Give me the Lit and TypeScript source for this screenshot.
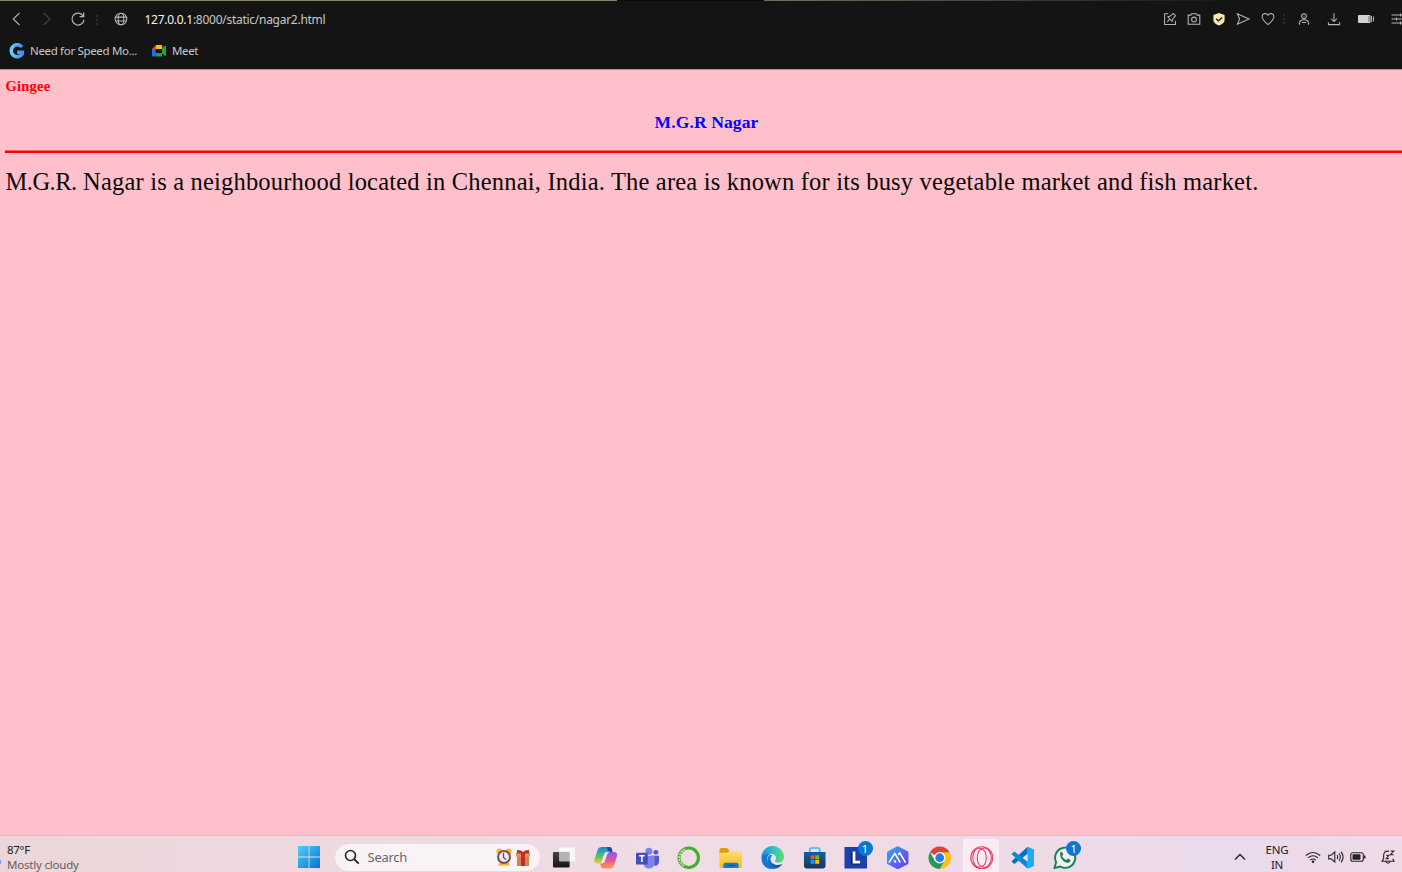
import { LitElement, html, svg, css } from "lit";
import { customElement } from "lit/decorators.js";

const line = (body: unknown, cls = "") => html`<svg class="glyph ${cls}" viewBox="0 0 16 16">${body}</svg>`;
const app = (body: unknown) => html`<svg class="app" viewBox="0 0 24 24">${body}</svg>`;

@customElement("browser-bar")
class BrowserBar extends LitElement {
  static styles = css`
    :host { display: block; height: 69px; box-sizing: border-box; background: #141414; font-family: "Noto Sans", "Open Sans", sans-serif; font-size: 12px; color: #c8c8c8; overflow: hidden; }
    .tabs { display: flex; justify-content: space-between; height: 1px; background: #0b0b0b; }
    .tabs .left { width: 617px; background: #8b8468; }
    .tabs .right { width: 638px; background: linear-gradient(90deg, #77705a, #3a382e 45%, #141414 75%); }
    .nav { display: flex; align-items: center; height: 37px; white-space: nowrap; }
    .glyph { width: 16px; height: 16px; flex: none; fill: none; stroke: #b5b5b5; stroke-width: 1.05; display: block; margin-bottom: 0.4px; }
    .dim { stroke: #454545; }
    .dots { flex: none; width: 2px; height: 10px; background: repeating-linear-gradient(#2c2c2c 0 2px, transparent 2px 4px); }
    .back { margin-left: 8px; }
    .fwd { margin-left: 15px; }
    .reload { margin-left: 15px; margin-right: 10px; }
    .globe { margin-left: 15px; }
    .url { margin-left: 15.5px; letter-spacing: -0.27px; line-height: 18px; }
    .host { color: #f3f3f3; }
    .tools { display: flex; align-items: center; gap: 8.6px; margin-left: auto; margin-right: -5px; }
    .tools .dots { margin-left: -2px; }
    .person { margin-left: 2.5px; }
    .download { margin-left: 5.5px; }
    .battery { margin-left: 7.5px; }
    .sliders { margin-left: 8.5px; }
    .marks { display: flex; align-items: center; height: 26px; padding-left: 9px; white-space: nowrap; line-height: 18px; font-size: 11.5px; }
    .mark { width: 16px; height: 16px; flex: none; }
    .name { margin: 0 14px 0 5px; letter-spacing: -0.33px; }
  `;
  render() {
    return html`
      <div class="tabs"><div class="left"></div><div class="right"></div></div>
      <div class="nav">
        ${line(svg`<path d="M11.5 2 5.2 8l6.3 6"/>`, "back")}
        ${line(svg`<path d="m4.7 2 6.3 6-6.3 6"/>`, "fwd dim")}
        ${line(svg`<path d="M13 4.6A6 6 0 1 0 14 8.9M13.7 1.6v4H9.6" stroke-width="1.25"/>`, "reload")}
        <span class="dots"></span>
        ${line(svg`<circle cx="8" cy="8" r="5.8"/><ellipse cx="8" cy="8" rx="2.8" ry="5.8"/><path d="M2.6 6.1h10.8M2.6 10h10.8"/>`, "globe")}
        <span class="url"><span class="host">127.0.0.1</span>:8000/static/nagar2.html</span>
        <div class="tools">
          ${line(svg`<path d="M6.2 2.8H2.6v10.7h10.8V9.8M5.2 10.8l3-3M5.8 6l4.3 4.3.8-2.6 2.7-3-2.3-2.3-3 2.7z"/>`)}
          ${line(svg`<path d="M2.2 4.1h2.5l1-1.4h4.6l1 1.4h2.5v9.1H2.2z"/><circle cx="8" cy="8.5" r="2.4"/>`)}
          ${line(svg`<path d="m8 2 5.6 1.9v5.2c0 2.7-2.2 4.200-5.600 5.400-3.400-1.200-5.600-2.700-5.600-5.400V3.900z" fill="#fbe6b5" stroke="none"/><path d="m5.2 7.8 2.2 2 3.8-3.400" stroke="#222" stroke-width="1.4"/>`)}
          ${line(svg`<path d="m2.4 2.800 11.600 5.200-11.600 5.300 2.200-5.300z"/>`)}
          ${line(svg`<path d="M8 13.6C5 11.2 2.1 8.7 2.1 5.6c0-3.2 4-4.3 5.9-1.3 1.9-3 5.9-1.9 5.9 1.3 0 3.1-2.9 5.6-5.9 8z"/>`)}
          <span class="dots"></span>
          ${line(svg`<circle cx="8" cy="5.1" r="2.4"/><circle cx="8" cy="5.100" r=".6" fill="#b5b5b5" stroke="none"/><path d="M3.500 13.700v-1.300c0-2.300 1.700-3.600 4.500-3.600s4.500 1.300 4.500 3.600v1.300M5.800 11.400h4.400"/>`, "person")}
          ${line(svg`<path d="M8 2.200v8.100M5 7.500l3 3 3-3M2.400 11.200v2.400h11.200v-2.400"/>`, "download")}
          ${line(svg`<rect x="0" y="4" width="12.500" height="8" rx="1" fill="#d2d2d2" stroke="none"/><path d="M11 5v6" stroke="#444" stroke-width=".7"/><path d="M13.500 5v6M15.500 5.500v5" stroke-width="1"/>`, "battery")}
          ${line(svg`<path d="M.5 4H16M.5 8H16M.5 12H16M9.500 2.500v3M5.500 6.500v3M9.500 10.500v3"/>`, "sliders")}
        </div>
      </div>
      <div class="marks">
        <svg class="mark" viewBox="0 0 16 16"><defs><linearGradient id="g"><stop stop-color="#65d0ff"/><stop offset="1" stop-color="#438cf5"/></linearGradient></defs><path d="M13 4A6 6 0 1 0 13.300 11V9.200H8.200" fill="none" stroke="url(#g)" stroke-width="3.600"/></svg>
        <span class="name">Need for Speed Mo...</span>
        <svg class="mark" viewBox="0 0 16 16"><path d="M1 6 5 2v4z" fill="#ea4335"/><path d="M1 6h3.700v7.500H2A1 1 0 0 1 1 12.500z" fill="#1a73e8"/><path d="M5 2h6.200v4H5z" fill="#fbbc04"/><path d="M4.700 10H11V5l3-2.200q1-.5 1 .6v9q0 1-1 .4L11 10.500V13.500H4.700z" fill="#24a148"/><path d="M5 6h5v4H5z" fill="#141414"/></svg>
        <span class="name">Meet</span>
      </div>
    `;
  }
}

@customElement("place-page")
class PlacePage extends LitElement {
  static styles = css`
    :host { display: block; height: 766px; box-sizing: border-box; background: #ffc0cb; border-top: 1px solid #b98c95; padding: 6px 0 0 5px; font-family: "Liberation Serif", serif; overflow: hidden; white-space: nowrap; }
    .town { margin: 0 0 0 0.6px; font-size: 14.5px; line-height: 20px; font-weight: bold; color: #f00; letter-spacing: 0.2px; }
    .title { margin: 15px -6px 0 0; text-align: center; font-size: 17.5px; line-height: 22px; font-weight: bold; color: #00f; letter-spacing: 0.12px; }
    .rule { height: 2px; background: #f00; border-top: 1px solid #ff5c62; margin-top: 17px; }
    .about { margin: 13px 0 0 0.5px; font-size: 24.5px; line-height: 31px; color: #080808; letter-spacing: 0.19px; }
    .initials { letter-spacing: -0.5px; }
  `;
  render() {
    return html`
      <h2 class="town">Gingee</h2>
      <h1 class="title">M.G.R Nagar</h1>
      <div class="rule"></div>
      <p class="about"><span class="initials">M.G.R.</span> Nagar is a neighbourhood located in Chennai, India. The area is known for its busy vegetable market and fish market.</p>
    `;
  }
}

const apps: { id: string; icon: unknown; active?: boolean; badge?: string }[] = [
  { id: "taskview", icon: svg`<defs><linearGradient id="tv" y2="1" x2="0"><stop stop-color="#444"/><stop offset="1" stop-color="#151515"/></linearGradient></defs><rect x="1" y="6" width="17" height="16" rx="1" fill="url(#tv)"/><rect x="7.500" y="1.500" width="16" height="14" rx="1" fill="#fafafa" opacity=".95"/><path d="M7.500 6H18v9.500H7.500z" fill="#b4b4b4"/>` },
  { id: "copilot", icon: svg`<defs><linearGradient id="c1" x2="0" y2="1"><stop stop-color="#1787e0"/><stop offset=".55" stop-color="#54be7b"/><stop offset="1" stop-color="#f3d026"/></linearGradient><linearGradient id="c2" x2="0" y2="1"><stop stop-color="#7b5fe9"/><stop offset=".5" stop-color="#e554a3"/><stop offset="1" stop-color="#fc9d48"/></linearGradient></defs><path d="M8 1h7c2 0 2 2 2.500 4l-4 1-3 9c-.8 2-1.500 3-3.500 3H4c-3.500 0-4.300-2-3.300-5L3.500 4.500C4.300 2 5.500 1 8 1z" fill="url(#c1)"/><path d="M16 23H9c-2 0-2-2-2.500-5l4-1 3-8.500C14.300 6.500 15 6 17 6h3c3.500 0 4.300 2 3.300 5l-2.800 8.500c-.8 2.500-2 3.500-4.500 3.500z" fill="url(#c2)"/><path d="M13 1h3c2 0 2.500 2 3 5h-2c-3 0-3-3-4-5z" fill="#1847b3"/><path d="m10.500 8-3.300 9.500c2.500.5 3.200-1 3.900-3L14 6.200c-2 0-3 .5-3.500 1.800z" fill="#f4e2e8"/>` },
  { id: "teams", icon: svg`<circle cx="20.300" cy="6.500" r="2.500" fill="#5059c9"/><path d="M16 10h7.500v6c0 5-7 6-7 0z" fill="#5059c9"/><circle cx="13.200" cy="5.300" r="3.600" fill="#7b83eb"/><path d="M7.500 10H19v7c0 8-11.500 8-11.500 0z" fill="#7b83eb"/><rect y="7" width="12" height="12" rx="1" fill="#454eb8"/><path d="M3.200 10h5.600M6 10v6.300" stroke="#fff" stroke-width="1.600"/>` },
  { id: "anaconda", icon: svg`<circle cx="12" cy="12" r="9.900" fill="none" stroke="#43b02a" stroke-width="3.200"/><path d="M8.200 3.300A9.700 9.700 0 0 0 7 20.300" fill="none" stroke="#f0dde5" stroke-width="1.500" stroke-dasharray="1.800 1.300"/><path d="M6 3.500A10.500 10.500 0 0 0 5 19.500" fill="none" stroke="#f0dde5" stroke-width="1" stroke-dasharray="1 1.800"/>` },
  { id: "files", icon: svg`<defs><linearGradient id="f" x2="0" y2="1"><stop stop-color="#ffe06b"/><stop offset="1" stop-color="#f5b919"/></linearGradient></defs><path d="M.5 4q0-2 2-2h5.500l3 3h10q2 0 2 2v4H.5z" fill="#dc9d10"/><path d="M.5 7H8l3-2h10.500q2 0 2 2v13.500q0 2-2 2H2.500q-2 0-2-2z" fill="url(#f)"/><path d="M4.500 22.500V19q0-2 2-2H18q2 0 2 2v3.500z" fill="#167bc9"/><path d="M8.500 19.800h8" stroke="#0d4377"/>` },
  { id: "edge", icon: svg`<defs><linearGradient id="e1"><stop stop-color="#168fd3"/><stop offset=".55" stop-color="#31c3cf"/><stop offset="1" stop-color="#6add59"/></linearGradient><linearGradient id="e2" x2="1" y2="1"><stop stop-color="#168bd6"/><stop offset="1" stop-color="#114a99"/></linearGradient></defs><path d="M.5 12A11.500 11.500 0 0 1 23.500 11c0 4-2.700 6-6 6-2.500 0-4.200-1-3.200-2.300C17 12 14.500 8 10 8 5 8 1 10.500.5 12z" fill="url(#e1)"/><path d="M.5 12C1 9 5 7.200 10 8c-3 1.200-4.500 4-3.500 7.500 2 5.500 9.500 6.500 15.500 2.500C18 26 .5 26.500.5 12z" fill="#1677cf"/><path d="M10 8.800C5.500 11 5 17 9.500 20.500c4 3 9.500 1 12-2-6 2.500-12-.5-11.800-5.500.1-1.500.8-2.300 2-2.700z" fill="url(#e2)"/><path d="M10.200 13c.2-4 5.700-3 4.300 1.300-1 2 .8 3 3.500 2.700-3.500 2.200-8-.2-7.800-4z" fill="#f1e1eb"/>` },
  { id: "store", icon: svg`<defs><linearGradient id="s" x2="0" y2="1"><stop stop-color="#13619f"/><stop offset="1" stop-color="#18345b"/></linearGradient></defs><path d="M7 6V3.500Q7 2 8.500 2h7Q17 2 17 3.500V6" fill="none" stroke="#3bb9ed" stroke-width="1.700"/><path d="M1 6h22v14.500q0 2.500-2.500 2.500h-17Q1 23 1 20.500z" fill="url(#s)"/><path d="M7.800 9.500h4v4h-4z" fill="#f25022"/><path d="M12.500 9.500h4v4h-4z" fill="#7fba00"/><path d="M7.800 14.200h4v4h-4z" fill="#00a4ef"/><path d="M12.500 14.200h4v4h-4z" fill="#ffb900"/>` },
  { id: "lens", badge: "1", icon: svg`<path d="M.5 1h23v22H.5z" fill="#1d3fae"/><path d="m7 7 4-1v10h6v3H7z" fill="#0b2354"/><path d="M10.200 5.500v11h6.300" fill="none" stroke="#fff" stroke-width="2.800"/>` },
  { id: "altair", icon: svg`<defs><linearGradient id="a" x2="1" y2="1"><stop stop-color="#35a1f6"/><stop offset="1" stop-color="#713be9"/></linearGradient></defs><path d="m12 2 9.200 5v10L12 22l-9.200-5V7z" fill="url(#a)" stroke="url(#a)" stroke-width="3.500" stroke-linejoin="round"/><path d="m3 17 6-9.500 5.500 9.500M8.500 14.500 10 17M12.500 9l1.500-2 6 10" fill="none" stroke="#fff" stroke-width="1.700" stroke-linejoin="round"/>` },
  { id: "chrome", icon: svg`<path d="M12 12 2 6.300A11.500 11.500 0 0 1 22 6.300z" fill="#db4437"/><path d="M12 12V6.300h10a11.500 11.500 0 0 1-10 17.200l5-8.500z" fill="#fbc116"/><path d="M2 6.300 7 15l5 2 5-2-5 8.500A11.500 11.500 0 0 1 2 6.300z" fill="#249b50"/><circle cx="12" cy="12" r="5.800" fill="#fff"/><circle cx="12" cy="12" r="4.500" fill="#2c7be5"/>` },
  { id: "opera", active: true, icon: svg`<g fill="none" stroke="#f33a66" stroke-width="1.150"><circle cx="12" cy="12" r="11.200"/><ellipse cx="12" cy="12" rx="4.600" ry="8.800"/><path d="M12 3.200c2-2 5.500-1.300 7.500 1.800 2.800 4.200 2.800 9.800 0 14-2 3.100-5.500 3.800-7.500 1.800M12 3.200C9 1.500 6.500 2.500 4.800 5c-2.600 4-2.600 10 0 14 1.700 2.500 4.200 3.500 7.200 1.800"/></g>` },
  { id: "vscode", icon: svg`<path d="m17 .8 6.500 2.700v17L17 23.200z" fill="#24a9f2"/><path d="M17 .8v7L3.500 18.500.8 16.300v-1z" fill="#0074bd"/><path d="M17 23.200v-7L3.500 5.500.8 7.700v1z" fill="#0b8bd5"/>` },
  { id: "whatsapp", badge: "1", icon: svg`<path d="m1.500 22.500 1.700-6A10.300 10.300 0 1 1 7.500 21z" fill="#f6eff1" stroke="#16834c" stroke-width="2"/><path d="M7.700 6.200c1-.8 1.700-.3 2.500 2 .2.800-.3 1.300-1 2 1 2 2.300 3.200 4.400 4 .8-1 1.200-1.500 2-1.200 2.700 1.200 2.700 1.500 2 2.600-3.700 5-12.500-3.500-9.900-9.400z" fill="#16834c"/>` },
];

@customElement("task-bar")
class TaskBar extends LitElement {
  static styles = css`
    :host { display: flex; height: 37px; box-sizing: border-box; border-top: 1px solid #dcbcc6; background: linear-gradient(90deg, #ebd7d9, #eed9df 22%, #efdce5 50%, #efdbe8 75%, #eadaec 88%, #efdae8); font-family: "Noto Sans", "Open Sans", sans-serif; font-size: 12px; white-space: nowrap; overflow: hidden; color: #202020; }
    .weather { width: 298px; flex: none; box-sizing: border-box; padding: 6px 0 0 7px; line-height: 15px; font-size: 11.5px; letter-spacing: -0.3px; background: radial-gradient(circle at -1px 26px, #659af5 0 2px, transparent 2.6px); }
    .sky { color: #655b5f; font-size: 11.5px; letter-spacing: -0.2px; }
    .start { width: 22px; height: 22px; flex: none; margin-top: 10px; }
    .search { display: flex; align-items: center; box-sizing: border-box; width: 207px; height: 29px; flex: none; margin: 6.5px 0 0 13.5px; padding: 0 10px 0 9px; border-radius: 15px; background: #faf3f6; border: 1px solid #e9dae1; color: #666; font-size: 13px; }
    .lens { width: 16px; height: 16px; margin-right: 8px; }
    .hint { flex: 1; letter-spacing: -0.25px; }
    .clock { width: 16px; height: 18px; margin-right: 3px; }
    .gift { width: 16px; height: 18px; margin-right: -1px; }
    .apps { display: flex; margin-left: 2.4px; }
    .slot { width: 41.75px; flex: none; display: flex; justify-content: center; }
    .tile { position: relative; width: 36px; height: 38px; margin-top: 3px; border-radius: 4px; display: flex; justify-content: center; box-sizing: border-box; padding-top: 6.6px; }
    .active { background: #f9edf4; }
    .app { width: 23.5px; height: 23.5px; flex: none; }
    .badge { position: absolute; left: 19.5px; top: 2px; width: 15px; height: 15px; border-radius: 50%; background: #0878d1; color: #fff; font-size: 11px; line-height: 15px; text-align: center; }
    .tray { display: flex; margin-left: auto; }
    .glyph { width: 16px; height: 16px; flex: none; margin-top: 13px; fill: none; stroke: #242424; stroke-width: 1.1; }
    .lang { width: 30px; margin: 6px 13px 0 14px; text-align: center; line-height: 15px; font-size: 11.5px; letter-spacing: -0.2px; }
    .vol { margin-left: 7px; }
    .bat { margin-left: 6px; }
    .bell { margin: 13px 6px 0 14px; }
  `;
  render() {
    return html`
      <div class="weather"><div>87°F</div><div class="sky">Mostly cloudy</div></div>
      <svg class="start" viewBox="0 0 22 22"><defs><linearGradient id="w" gradientUnits="userSpaceOnUse" x1="0" y1="0" x2="22" y2="22"><stop stop-color="#4fd0fa"/><stop offset="1" stop-color="#0472d1"/></linearGradient></defs><path d="M0 0h10.600v10.600H0zM11.400 0H22v10.600H11.400zM0 11.400h10.600V22H0zM11.400 11.400H22V22H11.400z" fill="url(#w)"/></svg>
      <div class="search">
        <svg class="lens" viewBox="0 0 16 16"><circle cx="6.500" cy="6.500" r="5" fill="none" stroke="#242424" stroke-width="1.600"/><path d="m10.200 10.200 4.500 4.500" stroke="#242424" stroke-width="1.900"/></svg>
        <span class="hint">Search</span>
        <svg class="clock" viewBox="0 0 16 18"><circle cx="3.500" cy="3.500" r="3" fill="#f5b22b"/><circle cx="12.500" cy="3.500" r="3" fill="#f5b22b"/><path d="M2 17.500 4 14h8l2 3.500z" fill="#f5b22b"/><circle cx="8" cy="9" r="6" fill="#f0e8f5" stroke="#795049" stroke-width="2"/><path d="M7.500 5v4.500l2.500 2" fill="none" stroke="#5f3b67" stroke-width="1.200"/></svg>
        <svg class="gift" viewBox="0 0 16 18"><path d="M2 7.500h12V18H2z" fill="#c9875b"/><path d="M1 4.500h14v4.300H1z" fill="#d5986b"/><path d="M6 4.500h4V18H6zM2 2l4 .5L8 4l2-1.500L14 2v3.500H2z" fill="#c82b26"/></svg>
      </div>
      <div class="apps">
        ${apps.map((a) => html`<div class="slot"><div class="tile ${a.active ? "active" : ""}">${app(a.icon)}${a.badge ? html`<span class="badge">${a.badge}</span>` : ""}</div></div>`)}
      </div>
      <div class="tray">
        ${line(svg`<path d="m3 10.500 5-5 5 5" stroke-width="1.400"/>`)}
        <div class="lang">ENG<br>IN</div>
        ${line(svg`<path d="M.8 6.500q7.200-6 14.400 0M3 8.900q5-4.300 10 0M5.200 11.200q2.800-2.400 5.600 0"/><circle cx="8" cy="12.800" r="1.300" fill="#242424" stroke="none"/>`)}
        ${line(svg`<path d="M.7 6.200h2.500l3.600-3.300v10.200L3.200 9.900H.7zM9 6q1.400 2 0 4M11 4.300q2.700 3.700 0 7.400M13 2.700q4.300 5.300 0 10.600"/>`, "vol")}
        ${line(svg`<rect x=".8" y="3.700" width="12.500" height="8.600" rx="2"/><rect x="2.500" y="5.300" width="8" height="5.400" rx=".7" fill="#242424" stroke="none"/><path d="M14.700 6.500v3" stroke-width="1.500"/>`, "bat")}
        ${line(svg`<path d="M9 2.200Q3.600 1.300 3.600 7v2.500L2 12.300h12l-1.200-2.500M6 12.800q2 2.800 4 0M6.200 6.300h2.700l-2.700 3.300h2.700M10.500 2h3.200l-3.200 3.700h3.200"/>`, "bell")}
      </div>
    `;
  }
}

@customElement("app-root")
class AppRoot extends LitElement {
  static styles = css`
    :host { display: block; width: 1402px; height: 872px; overflow: hidden; }
  `;
  render() {
    return html`<browser-bar></browser-bar><place-page></place-page><task-bar></task-bar>`;
  }
}
